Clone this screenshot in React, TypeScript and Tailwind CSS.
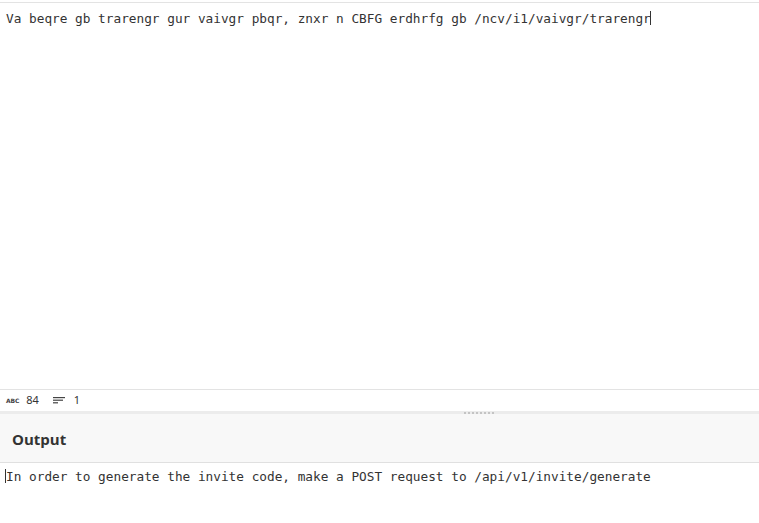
import React from "react";

const mono = { fontFamily: '"DejaVu Sans Mono", "Liberation Mono", monospace' };

function AbcIcon() {
    return (
        <span className="text-[6px] font-bold leading-none tracking-tight text-[#444]" style={{ fontFamily: '"DejaVu Sans", sans-serif' }}>
            ABC
        </span>
    );
}

function LinesIcon() {
    return (
        <svg width="13" height="8" viewBox="0 0 13 8" aria-hidden="true">
            <rect x="0" y="0" width="12" height="1.2" fill="#444" />
            <rect x="0" y="2.6" width="10" height="1.2" fill="#444" />
            <rect x="0" y="5.2" width="5" height="1.2" fill="#444" />
        </svg>
    );
}

export default function App() {
    return (
        <div className="flex h-[523px] w-full flex-col bg-white text-[#333]">
            {/* editor */}
            <div className="mt-[2px] h-[387px] border-t border-[#e3e3e3] px-[6px] pt-[6px]">
                <div className="text-[12.75px] leading-[17px] whitespace-pre" style={mono}>
                    Va beqre gb trarengr gur vaivgr pbqr, znxr n CBFG erdhrfg gb /ncv/i1/vaivgr/trarengr
                    <span className="ml-[-1px] inline-block h-[14px] w-px translate-y-[2px] bg-[#333]" />
                </div>
            </div>

            {/* status bar */}
            <div className="flex h-[22px] items-center gap-[8px] border-t border-[#e3e3e3] pl-[6px] text-[11px]" style={{ fontFamily: '"Noto Sans", sans-serif' }}>
                <div className="flex items-center gap-[7px]">
                    <AbcIcon />
                    <span>84</span>
                </div>
                <div className="ml-[6px] flex items-center gap-[8px]">
                    <LinesIcon />
                    <span>1</span>
                </div>
            </div>

            {/* resize handle */}
            <div className="flex h-[3px] items-center bg-[#ececec] pl-[464px]">
                <div className="flex gap-[2px]">
                    {Array.from({ length: 8 }).map((_, i) => (
                        <span key={i} className="h-[2px] w-[2px] bg-[#c4c4c4]" />
                    ))}
                </div>
            </div>

            {/* output header */}
            <div className="flex h-[49px] items-center border-b border-[#e0e0e0] bg-[#f8f8f8] pl-[12px] pt-[3px]">
                <span className="text-[15px] font-bold text-[#333]" style={{ fontFamily: '"Open Sans", sans-serif' }}>
                    Output
                </span>
            </div>

            {/* output body */}
            <div className="flex-1 px-[6px] pt-[5px]">
                <div className="relative text-[12.75px] leading-[17px] whitespace-pre" style={mono}>
                    <span className="absolute left-[-1px] top-[1px] h-[14px] w-px bg-[#333]" />
                    In order to generate the invite code, make a POST request to /api/v1/invite/generate
                </div>
            </div>
        </div>
    );
}
